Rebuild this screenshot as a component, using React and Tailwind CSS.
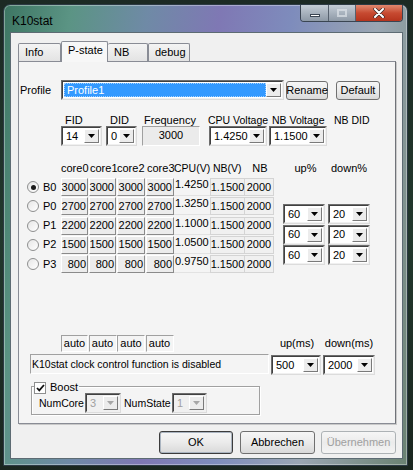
import React from 'react';

const font = "font-['Liberation_Sans',Arial,sans-serif]";

const Arrow = ({ disabled }) => (
  <svg width="7" height="4" viewBox="0 0 7 4">
    <path d="M0 0h7L3.5 4z" fill={disabled ? '#a6a6a6' : '#000'} />
  </svg>
);

function Combo({ className = '', value, disabled, selected }) {
  return (
    <div
      className={`flex h-[20px] border border-t-[#6d6d6d] border-l-[#6d6d6d] border-b-[#dcdcdc] border-r-[#dcdcdc] ${className}`}
    >
      <div
        className={`flex flex-1 p-[1px] border border-t-[#404040] border-l-[#404040] border-b-[#f0f0f0] border-r-[#f0f0f0] ${
          disabled ? 'bg-[#f0f0f0]' : 'bg-white'
        }`}
      >
        <div
          className={`flex flex-1 items-center pl-[2px] overflow-hidden whitespace-nowrap text-[11px] ${
            selected ? 'bg-[#3399ff] text-white border border-dotted border-[#9fcfff]' : ''
          } ${disabled ? 'text-[#a0a0a0]' : 'text-black'}`}
        >
          {value}
        </div>
        <div className="flex w-[15px] items-center justify-center bg-[#ececec] border border-t-white border-l-white border-b-[#7a7a7a] border-r-[#7a7a7a]">
          <Arrow disabled={disabled} />
        </div>
      </div>
    </div>
  );
}

function Button({ className = '', children, disabled, isDefault }) {
  return (
    <div
      className={`flex items-center justify-center rounded-[3px] border bg-gradient-to-b from-[#f6f6f6] via-[#ebebeb] to-[#d9d9d9] text-[11px] ${
        isDefault ? 'border-[#3c3c3c] shadow-[inset_0_0_0_1px_#aab4c0]' : 'border-[#707070]'
      } ${disabled ? 'text-[#a0a0a0] border-[#adb2b5] from-[#f4f4f4] to-[#f4f4f4]' : 'text-black'} ${className}`}
    >
      {children}
    </div>
  );
}

function CoreCell({ className = '', value }) {
  return (
    <div
      className={`flex h-[18px] items-center justify-end pr-[1px] text-[11px] bg-[#ececec] border border-t-white border-l-white border-b-[#8a8a8a] border-r-[#8a8a8a] ${className}`}
    >
      {value}
    </div>
  );
}

function Radio({ checked }) {
  return (
    <div className="flex h-[12px] w-[12px] items-center justify-center rounded-full border border-[#8e8f8f] bg-gradient-to-br from-[#e6e6e6] to-white">
      {checked && <div className="h-[5px] w-[5px] rounded-full bg-[#1b1b1b]" />}
    </div>
  );
}

function Tab({ label, selected, className = '' }) {
  if (selected) {
    return (
      <div
        className={`relative z-10 -mb-[1px] flex h-[21px] items-start pt-[2px] pl-[6px] text-[11px] border border-b-0 border-[#898c95] rounded-t-[2px] bg-[#f7f7f7] ${className}`}
      >
        {label}
      </div>
    );
  }
  return (
    <div
      className={`mt-[2px] flex h-[18px] items-center pl-[6px] text-[11px] border border-b-0 border-[#898c95] rounded-t-[2px] bg-gradient-to-b from-[#f4f4f4] to-[#e3e3e3] ${className}`}
    >
      {label}
    </div>
  );
}

const rows = [
  { name: 'B0', f: '3000', cpu: '1.4250', checked: true },
  { name: 'P0', f: '2700', cpu: '1.3250' },
  { name: 'P1', f: '2200', cpu: '1.1000' },
  { name: 'P2', f: '1500', cpu: '1.0500' },
  { name: 'P3', f: '800', cpu: '0.9750' },
];

export default function App() {
  return (
    <div
      className={`${font} h-[470px] w-[413px] overflow-hidden bg-gradient-to-b from-[#1c2a24] via-[#22382d] to-[#1a261f] pt-[4px] pl-[3px] text-[10.5px] leading-[13px] text-black`}
    >
      {/* window frame */}
      <div className="h-[462px] w-[405px] rounded-t-[7px] border border-[#2c3a44] bg-[linear-gradient(100deg,#3d7663_0%,#5b9484_14%,#6f8aa6_30%,#7f78b4_45%,#7e8cbc_60%,#9aa6b2_78%,#6a8272_100%)] shadow-[inset_0_0_0_1px_rgba(255,255,255,0.35)]">
        {/* title bar */}
        <div className="flex h-[27px] items-start">
          <div className="pl-[8px] pt-[9px] text-[12px] leading-[14px] text-black">K10stat</div>
          <div className="ml-auto mr-[4px] flex h-[17px] overflow-hidden rounded-b-[4px] border border-t-0 border-[#3a4552]">
            <div className="flex w-[28px] items-center justify-center border-r border-[#56616e] bg-gradient-to-b from-[#c4cdd6] to-[#8d99a6]">
              <div className="mt-[5px] h-[3px] w-[10px] border border-[#3a4552] bg-white" />
            </div>
            <div className="flex w-[27px] items-center justify-center border-r border-[#56616e] bg-gradient-to-b from-[#c4cdd6] to-[#8d99a6]">
              <div className="h-[8px] w-[10px] border-2 border-[#dde3e8] opacity-70" />
            </div>
            <div className="flex w-[46px] items-center justify-center bg-gradient-to-b from-[#e0886f] via-[#c74a31] to-[#b5341d]">
              <svg width="12" height="10" viewBox="0 0 12 10">
                <path d="M2 1l8 8M10 1l-8 8" stroke="#3a2a2a" strokeWidth="3.4" strokeLinecap="round" />
                <path d="M2 1l8 8M10 1l-8 8" stroke="#fff" strokeWidth="2" strokeLinecap="round" />
              </svg>
            </div>
          </div>
        </div>

        {/* client area */}
        <div className="ml-[6px] h-[427px] w-[393px] border border-[#5d6b73] bg-[#f0f0f0]">
          {/* tab strip */}
          <div className="ml-[7px] mt-[8px] flex h-[20px] items-start">
            <Tab label="Info" className="w-[43px]" />
            <Tab label="P-state" selected className="w-[47px]" />
            <Tab label="NB" className="w-[40px] border-l-0" />
            <Tab label="debug" className="w-[42px]" />
          </div>

          {/* tab panel */}
          <div className="ml-[7px] h-[363px] w-[378px] border border-[#898c95] border-r-[#6f7278] bg-[#f4f4f4] shadow-[1px_1px_0_#c9c9c9]">
            {/* profile row */}
            <div className="mt-[18px] flex items-center">
              <div className="w-[42px] pl-[1px] text-[11px]">Profile</div>
              <Combo className="w-[223px] h-[19px]" value="Profile1" selected />
              <Button className="ml-[2px] h-[19px] w-[42px]">Rename</Button>
              <Button className="ml-[8px] h-[19px] w-[44px]">Default</Button>
            </div>

            {/* voltage labels */}
            <div className="mt-[14px] flex h-[13px] text-[11px]">
              <div className="w-[46px]" />
              <div className="w-[45px]">FID</div>
              <div className="w-[34px]">DID</div>
              <div className="w-[64px]">Frequency</div>
              <div className="w-[64px] whitespace-nowrap text-[10.5px]">CPU Voltage</div>
              <div className="w-[62px] whitespace-nowrap text-[10.5px]">NB Voltage</div>
              <div className="whitespace-nowrap text-[10.5px]">NB DID</div>
            </div>

            {/* voltage controls */}
            <div className="mt-[-1px] flex">
              <div className="w-[42px]" />
              <Combo className="w-[41px]" value="14" />
              <Combo className="ml-[4px] w-[31px]" value="0" />
              <div className="ml-[5px] flex h-[20px] w-[58px] items-start justify-center pt-[2px] text-[11px] bg-[#ebebeb] border border-t-[#a0a0a0] border-l-[#a0a0a0] border-b-white border-r-white">
                3000
              </div>
              <Combo className="ml-[9px] w-[58px]" value="1.4250" />
              <Combo className="ml-[2px] w-[58px]" value="1.1500" />
            </div>

            {/* p-state table */}
            <div className="mt-[16px] flex">
              <div className="flex flex-col">
                <div className="flex h-[12px] whitespace-nowrap text-[11px]">
                  <div className="w-[42px]" />
                  <div className="w-[28px]">core0</div>
                  <div className="w-[28px] pl-[1px]">core1</div>
                  <div className="w-[29px]">core2</div>
                  <div className="w-[28px] pl-[1px]">core3</div>
                  <div className="w-[37px] text-[10.5px]">CPU(V)</div>
                  <div className="w-[35px] pl-[2px] text-[10.5px]">NB(V)</div>
                  <div className="w-[28px] text-center">NB</div>
                </div>
                <div className="mt-[4px] flex flex-col gap-[1.25px]">
                  {rows.map((r) => (
                    <div key={r.name} className="flex h-[18px] items-center text-[11px]">
                      <div className="flex w-[42px] items-center">
                        <div className="ml-[8px]">
                          <Radio checked={r.checked} />
                        </div>
                        <div className="ml-[4px]">{r.name}</div>
                      </div>
                      <CoreCell className="w-[27px]" value={r.f} />
                      <CoreCell className="ml-[1px] w-[27px]" value={r.f} />
                      <CoreCell className="ml-[1px] w-[28px]" value={r.f} />
                      <CoreCell className="ml-[1px] w-[28px]" value={r.f} />
                      <div className="flex h-[18px] w-[36px] items-start border-b border-[#e2e2e2] pl-[1px]">{r.cpu}</div>
                      <div className="flex h-[18px] w-[35px] items-center justify-center border border-[#d4d4d4] bg-[#f0f0f0]">1.1500</div>
                      <div className="flex h-[18px] w-[29px] items-center justify-center border border-l-0 border-[#d4d4d4] bg-[#f0f0f0]">2000</div>
                    </div>
                  ))}
                </div>
              </div>

              {/* up / down thresholds */}
              <div className="ml-[9px] flex flex-col">
                <div className="flex h-[12px] text-[11px]">
                  <div className="w-[45px] text-center">up%</div>
                  <div className="w-[42px] text-center">down%</div>
                </div>
                <div className="mt-[30px] flex flex-col gap-[0.5px]">
                  {[0, 1, 2].map((i) => (
                    <div key={i} className="flex">
                      <Combo className="w-[42px] h-[19px]" value="60" />
                      <Combo className="ml-[3px] w-[42px] h-[19px]" value="20" />
                    </div>
                  ))}
                </div>
              </div>
            </div>

            {/* bottom section */}
            <div className="mt-[62px] flex">
              <div className="flex w-[252px] flex-col">
                <div className="flex text-[11px]">
                  <div className="w-[42px]" />
                  {['w-[27px]', 'w-[28px]', 'w-[28px]', 'w-[28px]'].map((w, i) => (
                    <div
                      key={i}
                      className={`${w} flex h-[17px] items-center justify-center border border-t-[#a0a0a0] border-l-[#a0a0a0] border-b-white border-r-white bg-[#f4f4f4] ${
                        i ? 'ml-[0.5px]' : ''
                      }`}
                    >
                      auto
                    </div>
                  ))}
                </div>
                <div className="ml-[11px] mt-[2px] flex h-[20px] w-[239px] items-center whitespace-nowrap border border-t-[#a0a0a0] border-l-[#a0a0a0] border-b-white border-r-white pl-[1px]">
                  K10stat clock control function is disabled
                </div>
              </div>
              <div className="flex flex-col text-[11px]">
                <div className="mt-[2px] flex h-[13px]">
                  <div className="w-[52px] text-center">up(ms)</div>
                  <div className="w-[52px] text-center">down(ms)</div>
                </div>
                <div className="mt-[5px] flex">
                  <Combo className="w-[50px]" value="500" />
                  <Combo className="ml-[2px] w-[52px]" value="2000" />
                </div>
              </div>
            </div>

            {/* boost group */}
            <div className="relative ml-[12px] mt-[6px] h-[34px] w-[229px] text-[11px]">
              <div className="absolute inset-x-0 bottom-0 top-[5px] border border-[#a0a0a0] shadow-[inset_1px_1px_0_white,1px_1px_0_white]" />
              <div className="relative flex items-center">
                <div className="ml-[3px] flex h-[12px] w-[12px] items-center justify-center border border-[#8e8f8f] bg-white">
                  <svg width="9" height="8" viewBox="0 0 9 8">
                    <path d="M1 4l2.3 2.4L8 1" fill="none" stroke="#111" strokeWidth="1.8" />
                  </svg>
                </div>
                <div className="bg-[#f4f4f4] pl-[4px] pr-[1px]">Boost</div>
              </div>
              <div className="relative mt-[-1px] flex items-center">
                <div className="w-[54px] pl-[8px] text-[10.5px]">NumCore</div>
                <Combo className="w-[36px] h-[19px]" value="3" disabled />
                <div className="ml-[3px] w-[48px] text-[10.5px]">NumState</div>
                <Combo className="w-[35px] h-[19px]" value="1" disabled />
              </div>
            </div>
          </div>

          {/* dialog buttons */}
          <div className="mt-[7px] flex">
            <Button isDefault className="ml-[148px] h-[23px] w-[74px]">OK</Button>
            <Button className="ml-[7px] h-[23px] w-[75px]">Abbrechen</Button>
            <Button disabled className="ml-[6px] h-[23px] w-[75px]">Übernehmen</Button>
          </div>
        </div>
      </div>
    </div>
  );
}
